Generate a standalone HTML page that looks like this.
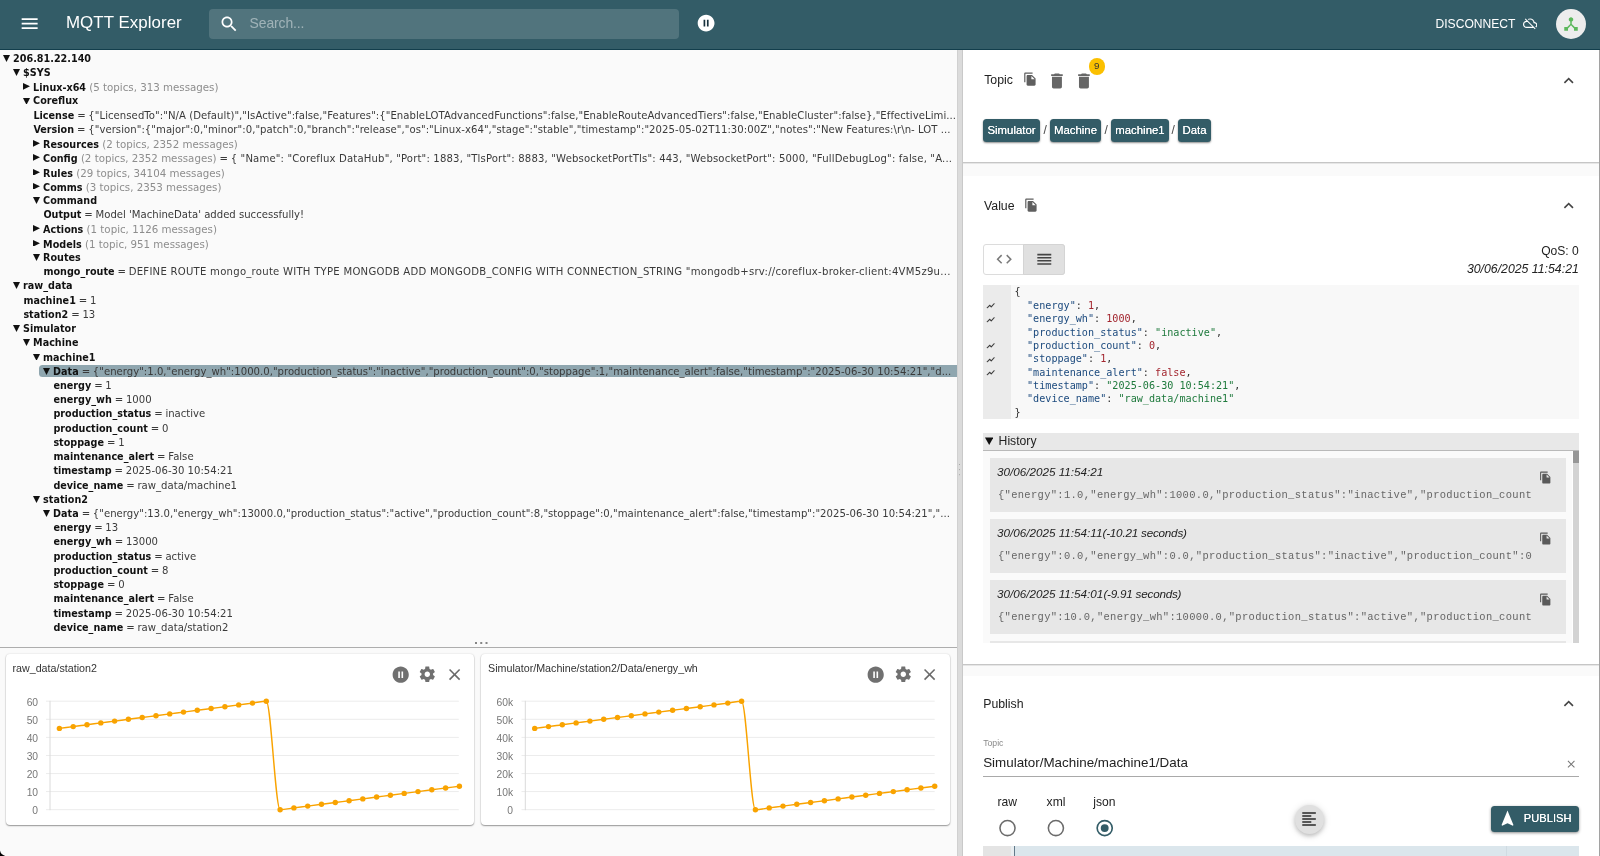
<!DOCTYPE html>
<html lang="en"><head><meta charset="utf-8"><title>MQTT Explorer</title>
<style>
*{box-sizing:border-box;margin:0;padding:0}
html,body{width:1600px;height:856px;overflow:hidden;background:#fafafa;font-family:"Liberation Sans",sans-serif;color:#222}
#app{position:absolute;left:0;top:0;width:1600px;height:856px;overflow:hidden;will-change:transform}
.abs,.ic,.tri,.row,.selbg,.cl,.trend,.hi{position:absolute}
#hdr{position:absolute;left:0;top:0;width:1600px;height:49.3px;background:#335c67;box-shadow:0 1px 0 #123e4c}
#title{position:absolute;left:66px;top:11.7px;font-size:16.9px;line-height:22px;color:#fff;letter-spacing:.05px}
#search{position:absolute;left:209px;top:9px;width:469.6px;height:29.7px;border-radius:4px;background:rgba(255,255,255,.15)}
#search span{position:absolute;left:40.6px;top:5.7px;font-size:13.9px;line-height:17px;letter-spacing:-.1px;color:rgba(255,255,255,.45)}
#disc{position:absolute;left:1435.5px;top:16.9px;font-size:12.1px;line-height:15px;color:#fff}
#tree{position:absolute;left:0;top:50px;width:957px;height:597px;background:#fafafa}
.row{height:14.23px;line-height:14.23px;font-family:"DejaVu Sans","Liberation Sans",sans-serif;font-size:10.1px;white-space:pre;overflow:hidden;text-overflow:ellipsis;color:#3a3a3a}
.row b{color:#111;font-weight:bold;font-size:9.65px}
.row .m{color:#8d8d8d;font-size:10.25px}
.row .e{letter-spacing:-.25px}
.tri{width:7px;height:6.9px;fill:#111}
.selbg{width:925px;height:11.3px;border-radius:3.5px 0 0 3.5px;background:#8fa6af}
#vdiv{position:absolute;left:957px;top:50px;width:6px;height:806px;background:#dbdbdb;border-left:1px solid #d0d0d0;border-right:1px solid #c9c9c9}
#hline{position:absolute;left:0;top:646.8px;width:957px;height:1px;background:#adadad}
.card{position:absolute;top:654.4px;width:468.8px;height:171px;background:#fff;border-radius:4px;box-shadow:0 1px 1.5px rgba(0,0,0,.38),0 0 2px rgba(0,0,0,.14)}
.ct{position:absolute;top:660.6px;font-size:10.7px;line-height:14px;color:#333}
.ax{font-size:10.3px;fill:#777;font-family:"Liberation Sans",sans-serif}
#right{position:absolute;left:963px;top:50px;width:637px;height:806px;background:#fafafa}
.sec{position:absolute;left:963px;width:637px;background:#fff;border-bottom:1px solid #c6c6c6;box-shadow:0 1px 0 #e6e6e6}
.lbl{position:absolute;font-size:12.1px;line-height:15px;color:#222}
.big{font-size:12.3px}
.chip{position:absolute;top:119px;height:23.3px;border-radius:3.5px;background:#335c67;color:#fff;font-size:11.4px;line-height:23px;text-align:center;box-shadow:0 1px 2px rgba(0,0,0,.45);text-shadow:0 0 .4px #fff}
.sl{position:absolute;top:123px;font-size:12px;line-height:15px;color:#444}
.cl{font-family:"DejaVu Sans Mono","Liberation Mono",monospace;font-size:10.15px;line-height:13.35px;white-space:pre;color:#333;height:13.35px}
.cl .k{color:#1c4a7e} .cl .n{color:#a3262f} .cl .s{color:#1f7a3d}
.trend{width:9.4px;height:9.4px}
.hi{left:990px;width:576px;height:53.7px;background:#e7e7e7;overflow:hidden}
.hd{position:absolute;left:7px;top:6.5px;font-size:11.7px;line-height:14px;font-style:italic;color:#222;white-space:nowrap}
.hp{position:absolute;left:8px;top:31.2px;width:534px;overflow:hidden;white-space:pre;font-family:"Liberation Mono",monospace;font-size:10.45px;letter-spacing:.33px;line-height:13px;color:#666}
</style></head><body>
<div id="app">
<div id="hdr"></div>
<svg class="ic" style="left:18.6px;top:12.9px;width:21.3px;height:21.3px" viewBox="0 0 24 24" ><path fill="#fff" d="M3 18h18v-2H3v2zm0-5h18v-2H3v2zm0-7v2h18V6H3z"/></svg>
<div id="title">MQTT Explorer</div>
<div id="search"><span>Search...</span></div>
<svg class="ic" style="left:218.9px;top:13.6px;width:20.3px;height:20.3px" viewBox="0 0 24 24" ><path fill="#fff" d="M15.500 14h-.79l-.28-.27C15.410 12.590 16 11.110 16 9.500 16 5.910 13.090 3 9.500 3S3 5.910 3 9.500 5.910 16 9.500 16c1.610 0 3.090-.59 4.230-1.570l.27.28v.79l5 4.990L20.490 19l-4.990-5zm-6 0C7.010 14 5 11.990 5 9.500S7.010 5 9.500 5 14 7.010 14 9.500 11.990 14 9.500 14z"/></svg>
<div class="abs" style="left:700px;top:18px;width:11px;height:11px;background:#17303c"></div><svg class="ic" style="left:695.6px;top:13.2px;width:20.2px;height:20.2px" viewBox="0 0 24 24" ><path fill="#fff" d="M12 2C6.480 2 2 6.480 2 12s4.480 10 10 10 10-4.480 10-10S17.520 2 12 2zm-1 14H9V8h2v8zm4 0h-2V8h2v8z"/></svg>
<div id="disc">DISCONNECT</div>
<svg class="ic" style="left:1522.6px;top:16.3px;width:14.4px;height:14.4px" viewBox="0 0 24 24" ><path fill="#fff" d="M19.35 10.040C18.670 6.590 15.640 4 12 4c-1.480 0-2.850.43-4.010 1.170l1.460 1.460C10.210 6.230 11.080 6 12 6c3.040 0 5.500 2.460 5.500 5.500v.5H19c1.660 0 3 1.340 3 3 0 1.130-.64 2.110-1.560 2.620l1.450 1.450C23.160 18.160 24 16.680 24 15c0-2.640-2.050-4.780-4.650-4.960zM3 5.270l2.750 2.740C2.560 8.150 0 10.770 0 14c0 3.310 2.690 6 6 6h11.730l2 2L21 20.730 4.270 4 3 5.270zM7.730 10l8 8H6c-2.210 0-4-1.790-4-4s1.790-4 4-4h1.730z"/></svg>
<div class="abs" style="left:1556px;top:9.2px;width:30px;height:30px;border-radius:50%;background:#ededed"></div>
<svg class="ic" style="left:1562px;top:14.8px;width:18px;height:18px" viewBox="0 0 24 24" ><path fill="#5cb85c" d="M17 16l-4-4V8.820C14.160 8.400 15 7.300 15 6c0-1.660-1.340-3-3-3S9 4.340 9 6c0 1.300.84 2.400 2 2.820V12l-4 4H3v5h5v-3.050l4-4.200 4 4.200V21h5v-5h-4z"/></svg>

<div id="tree"></div>
<svg class="tri" style="left:2.6px;top:54.85px" viewBox="0 0 10 10" preserveAspectRatio="none"><path d="M0 0 H10 L5 10 Z"/></svg><div class="row" style="left:13.1px;top:51.75px;width:944.9px"><b>206.81.22.140</b></div>
<svg class="tri" style="left:12.6px;top:69.08px" viewBox="0 0 10 10" preserveAspectRatio="none"><path d="M0 0 H10 L5 10 Z"/></svg><div class="row" style="left:23.1px;top:65.98px;width:934.9px"><b>$SYS</b></div>
<svg class="tri" style="left:23.3px;top:83.20px;width:7px;height:6.7px" viewBox="0 0 10 10" preserveAspectRatio="none"><path d="M0 0 V10 L10 5 Z"/></svg><div class="row" style="left:33.1px;top:80.20px;width:924.9px"><b>Linux-x64</b> <span class="m">(5 topics, 313 messages)</span></div>
<svg class="tri" style="left:22.6px;top:97.53px" viewBox="0 0 10 10" preserveAspectRatio="none"><path d="M0 0 H10 L5 10 Z"/></svg><div class="row" style="left:33.1px;top:94.43px;width:924.9px"><b>Coreflux</b></div>
<div class="row" style="left:33.4px;top:108.65px;width:924.6px"><b>License</b><span class="e"> = </span><span class="v" id="v4" style="letter-spacing:0.052px">{"LicensedTo":"N/A (Default)","IsActive":false,"Features":{"EnableLOTAdvancedFunctions":false,"EnableRouteAdvancedTiers":false,"EnableCluster":false},"EffectiveLimi...</span></div>
<div class="row" style="left:33.4px;top:122.88px;width:924.6px"><b>Version</b><span class="e"> = </span><span class="v" id="v5" style="letter-spacing:0.049px">{"version":{"major":0,"minor":0,"patch":0,"branch":"release","os":"Linux-x64","stage":"stable","timestamp":"2025-05-02T11:30:00Z","notes":"New Features:\r\n- LOT ...</span></div>
<svg class="tri" style="left:33.3px;top:140.11px;width:7px;height:6.7px" viewBox="0 0 10 10" preserveAspectRatio="none"><path d="M0 0 V10 L10 5 Z"/></svg><div class="row" style="left:43.1px;top:137.11px;width:914.9px"><b>Resources</b> <span class="m">(2 topics, 2352 messages)</span></div>
<svg class="tri" style="left:33.3px;top:154.33px;width:7px;height:6.7px" viewBox="0 0 10 10" preserveAspectRatio="none"><path d="M0 0 V10 L10 5 Z"/></svg><div class="row" style="left:43.1px;top:151.33px;width:914.9px"><b>Config</b> <span class="m">(2 topics, 2352 messages)</span><span class="e"> = </span><span class="v" id="v7" style="letter-spacing:0.157px">{ "Name": "Coreflux DataHub", "Port": 1883, "TlsPort": 8883, "WebsocketPortTls": 443, "WebsocketPort": 5000, "FullDebugLog": false, "A...</span></div>
<svg class="tri" style="left:33.3px;top:168.56px;width:7px;height:6.7px" viewBox="0 0 10 10" preserveAspectRatio="none"><path d="M0 0 V10 L10 5 Z"/></svg><div class="row" style="left:43.1px;top:165.56px;width:914.9px"><b>Rules</b> <span class="m">(29 topics, 34104 messages)</span></div>
<svg class="tri" style="left:33.3px;top:182.78px;width:7px;height:6.7px" viewBox="0 0 10 10" preserveAspectRatio="none"><path d="M0 0 V10 L10 5 Z"/></svg><div class="row" style="left:43.1px;top:179.78px;width:914.9px"><b>Comms</b> <span class="m">(3 topics, 2353 messages)</span></div>
<svg class="tri" style="left:32.6px;top:197.11px" viewBox="0 0 10 10" preserveAspectRatio="none"><path d="M0 0 H10 L5 10 Z"/></svg><div class="row" style="left:43.1px;top:194.01px;width:914.9px"><b>Command</b></div>
<div class="row" style="left:43.4px;top:208.24px;width:914.6px"><b>Output</b><span class="e"> = </span><span class="v" id="v11">Model 'MachineData' added successfully!</span></div>
<svg class="tri" style="left:33.3px;top:225.46px;width:7px;height:6.7px" viewBox="0 0 10 10" preserveAspectRatio="none"><path d="M0 0 V10 L10 5 Z"/></svg><div class="row" style="left:43.1px;top:222.46px;width:914.9px"><b>Actions</b> <span class="m">(1 topic, 1126 messages)</span></div>
<svg class="tri" style="left:33.3px;top:239.69px;width:7px;height:6.7px" viewBox="0 0 10 10" preserveAspectRatio="none"><path d="M0 0 V10 L10 5 Z"/></svg><div class="row" style="left:43.1px;top:236.69px;width:914.9px"><b>Models</b> <span class="m">(1 topic, 951 messages)</span></div>
<svg class="tri" style="left:32.6px;top:254.01px" viewBox="0 0 10 10" preserveAspectRatio="none"><path d="M0 0 H10 L5 10 Z"/></svg><div class="row" style="left:43.1px;top:250.91px;width:914.9px"><b>Routes</b></div>
<div class="row" style="left:43.4px;top:265.14px;width:914.6px"><b>mongo_route</b><span class="e"> = </span><span class="v" id="v15" style="letter-spacing:0.250px">DEFINE ROUTE mongo_route WITH TYPE MONGODB ADD MONGODB_CONFIG WITH CONNECTION_STRING "mongodb+srv://coreflux-broker-client:4VM5z9u...</span></div>
<svg class="tri" style="left:12.6px;top:282.47px" viewBox="0 0 10 10" preserveAspectRatio="none"><path d="M0 0 H10 L5 10 Z"/></svg><div class="row" style="left:23.1px;top:279.37px;width:934.9px"><b>raw_data</b></div>
<div class="row" style="left:23.4px;top:293.59px;width:934.6px"><b>machine1</b><span class="e"> = </span><span class="v" id="v17">1</span></div>
<div class="row" style="left:23.4px;top:307.82px;width:934.6px"><b>station2</b><span class="e"> = </span><span class="v" id="v18">13</span></div>
<svg class="tri" style="left:12.6px;top:325.14px" viewBox="0 0 10 10" preserveAspectRatio="none"><path d="M0 0 H10 L5 10 Z"/></svg><div class="row" style="left:23.1px;top:322.04px;width:934.9px"><b>Simulator</b></div>
<svg class="tri" style="left:22.6px;top:339.37px" viewBox="0 0 10 10" preserveAspectRatio="none"><path d="M0 0 H10 L5 10 Z"/></svg><div class="row" style="left:33.1px;top:336.27px;width:924.9px"><b>Machine</b></div>
<svg class="tri" style="left:32.6px;top:353.60px" viewBox="0 0 10 10" preserveAspectRatio="none"><path d="M0 0 H10 L5 10 Z"/></svg><div class="row" style="left:43.1px;top:350.50px;width:914.9px"><b>machine1</b></div>
<div class="selbg" style="left:39.0px;top:365.47px"></div><svg class="tri" style="left:42.6px;top:367.82px" viewBox="0 0 10 10" preserveAspectRatio="none"><path d="M0 0 H10 L5 10 Z"/></svg><div class="row" style="left:53.1px;top:364.72px;width:904.9px"><b>Data</b><span class="e"> = </span><span class="v" id="v22" style="letter-spacing:0.014px">{"energy":1.0,"energy_wh":1000.0,"production_status":"inactive","production_count":0,"stoppage":1,"maintenance_alert":false,"timestamp":"2025-06-30 10:54:21","d...</span></div>
<div class="row" style="left:53.4px;top:378.95px;width:904.6px"><b>energy</b><span class="e"> = </span><span class="v" id="v23">1</span></div>
<div class="row" style="left:53.4px;top:393.17px;width:904.6px"><b>energy_wh</b><span class="e"> = </span><span class="v" id="v24">1000</span></div>
<div class="row" style="left:53.4px;top:407.40px;width:904.6px"><b>production_status</b><span class="e"> = </span><span class="v" id="v25">inactive</span></div>
<div class="row" style="left:53.4px;top:421.63px;width:904.6px"><b>production_count</b><span class="e"> = </span><span class="v" id="v26">0</span></div>
<div class="row" style="left:53.4px;top:435.85px;width:904.6px"><b>stoppage</b><span class="e"> = </span><span class="v" id="v27">1</span></div>
<div class="row" style="left:53.4px;top:450.08px;width:904.6px"><b>maintenance_alert</b><span class="e"> = </span><span class="v" id="v28">False</span></div>
<div class="row" style="left:53.4px;top:464.30px;width:904.6px"><b>timestamp</b><span class="e"> = </span><span class="v" id="v29">2025-06-30 10:54:21</span></div>
<div class="row" style="left:53.4px;top:478.53px;width:904.6px"><b>device_name</b><span class="e"> = </span><span class="v" id="v30">raw_data/machine1</span></div>
<svg class="tri" style="left:32.6px;top:495.86px" viewBox="0 0 10 10" preserveAspectRatio="none"><path d="M0 0 H10 L5 10 Z"/></svg><div class="row" style="left:43.1px;top:492.76px;width:914.9px"><b>station2</b></div>
<svg class="tri" style="left:42.6px;top:510.08px" viewBox="0 0 10 10" preserveAspectRatio="none"><path d="M0 0 H10 L5 10 Z"/></svg><div class="row" style="left:53.1px;top:506.98px;width:904.9px"><b>Data</b><span class="e"> = </span><span class="v" id="v32" style="letter-spacing:0.023px">{"energy":13.0,"energy_wh":13000.0,"production_status":"active","production_count":8,"stoppage":0,"maintenance_alert":false,"timestamp":"2025-06-30 10:54:21","...</span></div>
<div class="row" style="left:53.4px;top:521.21px;width:904.6px"><b>energy</b><span class="e"> = </span><span class="v" id="v33">13</span></div>
<div class="row" style="left:53.4px;top:535.43px;width:904.6px"><b>energy_wh</b><span class="e"> = </span><span class="v" id="v34">13000</span></div>
<div class="row" style="left:53.4px;top:549.66px;width:904.6px"><b>production_status</b><span class="e"> = </span><span class="v" id="v35">active</span></div>
<div class="row" style="left:53.4px;top:563.89px;width:904.6px"><b>production_count</b><span class="e"> = </span><span class="v" id="v36">8</span></div>
<div class="row" style="left:53.4px;top:578.11px;width:904.6px"><b>stoppage</b><span class="e"> = </span><span class="v" id="v37">0</span></div>
<div class="row" style="left:53.4px;top:592.34px;width:904.6px"><b>maintenance_alert</b><span class="e"> = </span><span class="v" id="v38">False</span></div>
<div class="row" style="left:53.4px;top:606.56px;width:904.6px"><b>timestamp</b><span class="e"> = </span><span class="v" id="v39">2025-06-30 10:54:21</span></div>
<div class="row" style="left:53.4px;top:620.79px;width:904.6px"><b>device_name</b><span class="e"> = </span><span class="v" id="v40">raw_data/station2</span></div>
<div class="abs" style="left:475px;top:641.9px;width:1.7px;height:1.7px;background:#868686;box-shadow:5.25px 0 0 #868686,10.5px 0 0 #868686"></div>
<div id="hline"></div>
<div class="card" style="left:5.6px"></div>
<div class="card" style="left:481px"></div>
<div class="ct" style="left:12.5px">raw_data/station2</div>
<div class="ct" style="left:488.1px">Simulator/Machine/station2/Data/energy_wh</div>
<svg class="ic" style="left:390.9px;top:664.9px;width:19.4px;height:19.4px" viewBox="0 0 24 24" ><path fill="#707070" d="M12 2C6.480 2 2 6.480 2 12s4.480 10 10 10 10-4.480 10-10S17.520 2 12 2zm-1 14H9V8h2v8zm4 0h-2V8h2v8z"/></svg><svg class="ic" style="left:418.4px;top:665.3px;width:18.6px;height:18.6px" viewBox="0 0 24 24" ><path fill="#707070" d="M19.43 12.98c.04-.32.07-.64.07-.98s-.03-.66-.07-.98l2.11-1.65c.19-.15.24-.42.12-.64l-2-3.46c-.12-.22-.39-.3-.61-.22l-2.49 1c-.52-.4-1.08-.73-1.69-.98l-.38-2.65C14.46 2.180 14.250 2 14 2h-4c-.25 0-.46.18-.49.42l-.38 2.65c-.61.25-1.170.59-1.690.98l-2.490-1c-.23-.09-.49 0-.61.22l-2 3.460c-.13.22-.07.49.12.640l2.110 1.650c-.04.32-.07.650-.07.980s.03.66.07.98l-2.110 1.650c-.19.15-.24.42-.12.640l2 3.460c.12.22.39.3.61.22l2.490-1c.52.4 1.080.73 1.690.98l.38 2.650c.03.240.24.420.49.420h4c.25 0 .46-.18.49-.42l.38-2.650c.61-.25 1.170-.59 1.690-.98l2.490 1c.23.09.49 0 .61-.22l2-3.460c.12-.22.07-.49-.12-.64l-2.110-1.650zM12 15.500c-1.930 0-3.500-1.570-3.500-3.500s1.570-3.500 3.500-3.500 3.500 1.570 3.500 3.500-1.570 3.500-3.500 3.500z"/></svg><svg class="ic" style="left:445px;top:665px;width:19.2px;height:19.2px" viewBox="0 0 24 24" ><path fill="#6a6a6a" d="M19 6.410L17.590 5 12 10.590 6.410 5 5 6.410 10.590 12 5 17.590 6.410 19 12 13.410 17.590 19 19 17.590 13.410 12z"/></svg>
<svg class="ic" style="left:866.3px;top:664.9px;width:19.4px;height:19.4px" viewBox="0 0 24 24" ><path fill="#707070" d="M12 2C6.480 2 2 6.480 2 12s4.480 10 10 10 10-4.480 10-10S17.520 2 12 2zm-1 14H9V8h2v8zm4 0h-2V8h2v8z"/></svg><svg class="ic" style="left:893.9px;top:665.3px;width:18.6px;height:18.6px" viewBox="0 0 24 24" ><path fill="#707070" d="M19.43 12.98c.04-.32.07-.64.07-.98s-.03-.66-.07-.98l2.11-1.65c.19-.15.24-.42.12-.64l-2-3.46c-.12-.22-.39-.3-.61-.22l-2.49 1c-.52-.4-1.08-.73-1.69-.98l-.38-2.65C14.46 2.180 14.250 2 14 2h-4c-.25 0-.46.18-.49.42l-.38 2.65c-.61.25-1.170.59-1.690.98l-2.490-1c-.23-.09-.49 0-.61.22l-2 3.460c-.13.22-.07.49.12.640l2.110 1.650c-.04.32-.07.650-.07.980s.03.66.07.98l-2.110 1.650c-.19.15-.24.42-.12.640l2 3.460c.12.22.39.3.61.22l2.490-1c.52.4 1.080.73 1.690.98l.38 2.650c.03.240.24.420.49.420h4c.25 0 .46-.18.49-.42l.38-2.650c.61-.25 1.170-.59 1.690-.98l2.490 1c.23.09.49 0 .61-.22l2-3.460c.12-.22.07-.49-.12-.64l-2.110-1.650zM12 15.500c-1.930 0-3.500-1.570-3.500-3.500s1.570-3.500 3.500-3.500 3.500 1.570 3.500 3.500-1.570 3.500-3.500 3.500z"/></svg><svg class="ic" style="left:920.2px;top:665px;width:19.2px;height:19.2px" viewBox="0 0 24 24" ><path fill="#6a6a6a" d="M19 6.410L17.590 5 12 10.590 6.410 5 5 6.410 10.590 12 5 17.590 6.410 19 12 13.410 17.590 19 19 17.590 13.410 12z"/></svg>
<svg class="abs" style="left:0;top:0" width="957" height="856" viewBox="0 0 957 856">
<line x1="46.0" x2="458.8" y1="809.7" y2="809.7" stroke="#ececec" stroke-width="1"/>
<text x="38.1" y="813.9" text-anchor="end" class="ax">0</text>
<line x1="46.0" x2="458.8" y1="791.6" y2="791.6" stroke="#ececec" stroke-width="1"/>
<text x="38.1" y="795.8" text-anchor="end" class="ax">10</text>
<line x1="46.0" x2="458.8" y1="773.6" y2="773.6" stroke="#ececec" stroke-width="1"/>
<text x="38.1" y="777.8" text-anchor="end" class="ax">20</text>
<line x1="46.0" x2="458.8" y1="755.5" y2="755.5" stroke="#ececec" stroke-width="1"/>
<text x="38.1" y="759.7" text-anchor="end" class="ax">30</text>
<line x1="46.0" x2="458.8" y1="737.4" y2="737.4" stroke="#ececec" stroke-width="1"/>
<text x="38.1" y="741.6" text-anchor="end" class="ax">40</text>
<line x1="46.0" x2="458.8" y1="719.3" y2="719.3" stroke="#ececec" stroke-width="1"/>
<text x="38.1" y="723.5" text-anchor="end" class="ax">50</text>
<line x1="46.0" x2="458.8" y1="701.2" y2="701.2" stroke="#ececec" stroke-width="1"/>
<text x="38.1" y="705.5" text-anchor="end" class="ax">60</text>
<line x1="50.0" x2="50.0" y1="700.8" y2="810.2" stroke="#dadada" stroke-width="1"/>
<path d="M59.4 728.4 C64.0 727.8 68.6 727.2 73.2 726.6 C77.8 726.0 82.4 725.4 87.0 724.7 C91.6 724.1 96.2 723.5 100.8 722.9 C105.4 722.3 110.0 721.7 114.6 721.1 C119.2 720.5 123.8 719.9 128.4 719.3 C133.0 718.7 137.6 718.1 142.2 717.5 C146.8 716.9 151.4 716.3 156.0 715.7 C160.5 715.1 165.1 714.5 169.7 713.9 C174.3 713.3 178.9 712.7 183.5 712.1 C188.1 711.5 192.7 710.9 197.3 710.3 C201.9 709.7 206.5 709.1 211.1 708.5 C215.7 707.9 220.3 707.3 224.9 706.7 C229.5 706.1 234.1 705.5 238.7 704.9 C243.3 704.3 247.9 703.7 252.5 703.1 C257.1 702.5 261.7 701.2 266.3 701.2 C270.9 701.2 275.5 809.7 280.1 809.7 C284.7 809.7 289.3 808.5 293.9 807.9 C298.5 807.3 303.1 806.7 307.7 806.1 C312.3 805.5 316.9 804.9 321.5 804.3 C326.1 803.7 330.7 803.1 335.3 802.5 C339.9 801.9 344.5 801.3 349.1 800.7 C353.7 800.1 358.3 799.5 362.8 798.9 C367.4 798.3 372.0 797.6 376.6 797.0 C381.2 796.4 385.8 795.8 390.4 795.2 C395.0 794.6 399.6 794.0 404.2 793.4 C408.8 792.8 413.4 792.2 418.0 791.6 C422.6 791.0 427.2 790.4 431.8 789.8 C436.4 789.2 441.0 788.6 445.6 788.0 C450.2 787.4 454.8 786.8 459.4 786.2" fill="none" stroke="#f9a300" stroke-width="1.45" stroke-linejoin="round"/>
<circle cx="59.4" cy="728.4" r="2.7" fill="#f9a300"/>
<circle cx="73.2" cy="726.6" r="2.7" fill="#f9a300"/>
<circle cx="87.0" cy="724.7" r="2.7" fill="#f9a300"/>
<circle cx="100.8" cy="722.9" r="2.7" fill="#f9a300"/>
<circle cx="114.6" cy="721.1" r="2.7" fill="#f9a300"/>
<circle cx="128.4" cy="719.3" r="2.7" fill="#f9a300"/>
<circle cx="142.2" cy="717.5" r="2.7" fill="#f9a300"/>
<circle cx="156.0" cy="715.7" r="2.7" fill="#f9a300"/>
<circle cx="169.7" cy="713.9" r="2.7" fill="#f9a300"/>
<circle cx="183.5" cy="712.1" r="2.7" fill="#f9a300"/>
<circle cx="197.3" cy="710.3" r="2.7" fill="#f9a300"/>
<circle cx="211.1" cy="708.5" r="2.7" fill="#f9a300"/>
<circle cx="224.9" cy="706.7" r="2.7" fill="#f9a300"/>
<circle cx="238.7" cy="704.9" r="2.7" fill="#f9a300"/>
<circle cx="252.5" cy="703.1" r="2.7" fill="#f9a300"/>
<circle cx="266.3" cy="701.2" r="2.7" fill="#f9a300"/>
<circle cx="280.1" cy="809.7" r="2.7" fill="#f9a300"/>
<circle cx="293.9" cy="807.9" r="2.7" fill="#f9a300"/>
<circle cx="307.7" cy="806.1" r="2.7" fill="#f9a300"/>
<circle cx="321.5" cy="804.3" r="2.7" fill="#f9a300"/>
<circle cx="335.3" cy="802.5" r="2.7" fill="#f9a300"/>
<circle cx="349.1" cy="800.7" r="2.7" fill="#f9a300"/>
<circle cx="362.8" cy="798.9" r="2.7" fill="#f9a300"/>
<circle cx="376.6" cy="797.0" r="2.7" fill="#f9a300"/>
<circle cx="390.4" cy="795.2" r="2.7" fill="#f9a300"/>
<circle cx="404.2" cy="793.4" r="2.7" fill="#f9a300"/>
<circle cx="418.0" cy="791.6" r="2.7" fill="#f9a300"/>
<circle cx="431.8" cy="789.8" r="2.7" fill="#f9a300"/>
<circle cx="445.6" cy="788.0" r="2.7" fill="#f9a300"/>
<circle cx="459.4" cy="786.2" r="2.7" fill="#f9a300"/>
<line x1="521.5" x2="934.7" y1="809.7" y2="809.7" stroke="#ececec" stroke-width="1"/>
<text x="513.1" y="813.9" text-anchor="end" class="ax">0</text>
<line x1="521.5" x2="934.7" y1="791.6" y2="791.6" stroke="#ececec" stroke-width="1"/>
<text x="513.1" y="795.8" text-anchor="end" class="ax">10k</text>
<line x1="521.5" x2="934.7" y1="773.6" y2="773.6" stroke="#ececec" stroke-width="1"/>
<text x="513.1" y="777.8" text-anchor="end" class="ax">20k</text>
<line x1="521.5" x2="934.7" y1="755.5" y2="755.5" stroke="#ececec" stroke-width="1"/>
<text x="513.1" y="759.7" text-anchor="end" class="ax">30k</text>
<line x1="521.5" x2="934.7" y1="737.4" y2="737.4" stroke="#ececec" stroke-width="1"/>
<text x="513.1" y="741.6" text-anchor="end" class="ax">40k</text>
<line x1="521.5" x2="934.7" y1="719.3" y2="719.3" stroke="#ececec" stroke-width="1"/>
<text x="513.1" y="723.5" text-anchor="end" class="ax">50k</text>
<line x1="521.5" x2="934.7" y1="701.2" y2="701.2" stroke="#ececec" stroke-width="1"/>
<text x="513.1" y="705.5" text-anchor="end" class="ax">60k</text>
<line x1="525.3" x2="525.3" y1="700.8" y2="810.2" stroke="#dadada" stroke-width="1"/>
<path d="M534.7 728.4 C539.3 727.8 543.9 727.2 548.5 726.6 C553.1 726.0 557.7 725.4 562.3 724.7 C566.9 724.1 571.5 723.5 576.1 722.9 C580.7 722.3 585.3 721.7 589.9 721.1 C594.5 720.5 599.1 719.9 603.7 719.3 C608.3 718.7 612.9 718.1 617.5 717.5 C622.1 716.9 626.7 716.3 631.3 715.7 C635.8 715.1 640.4 714.5 645.0 713.9 C649.6 713.3 654.2 712.7 658.8 712.1 C663.4 711.5 668.0 710.9 672.6 710.3 C677.2 709.7 681.8 709.1 686.4 708.5 C691.0 707.9 695.6 707.3 700.2 706.7 C704.8 706.1 709.4 705.5 714.0 704.9 C718.6 704.3 723.2 703.7 727.8 703.1 C732.4 702.5 737.0 701.2 741.6 701.2 C746.2 701.2 750.8 809.7 755.4 809.7 C760.0 809.7 764.6 808.5 769.2 807.9 C773.8 807.3 778.4 806.7 783.0 806.1 C787.6 805.5 792.2 804.9 796.8 804.3 C801.4 803.7 806.0 803.1 810.6 802.5 C815.2 801.9 819.8 801.3 824.4 800.7 C829.0 800.1 833.6 799.5 838.1 798.9 C842.7 798.3 847.3 797.6 851.9 797.0 C856.5 796.4 861.1 795.8 865.7 795.2 C870.3 794.6 874.9 794.0 879.5 793.4 C884.1 792.8 888.7 792.2 893.3 791.6 C897.9 791.0 902.5 790.4 907.1 789.8 C911.7 789.2 916.3 788.6 920.9 788.0 C925.5 787.4 930.1 786.8 934.7 786.2" fill="none" stroke="#f9a300" stroke-width="1.45" stroke-linejoin="round"/>
<circle cx="534.7" cy="728.4" r="2.7" fill="#f9a300"/>
<circle cx="548.5" cy="726.6" r="2.7" fill="#f9a300"/>
<circle cx="562.3" cy="724.7" r="2.7" fill="#f9a300"/>
<circle cx="576.1" cy="722.9" r="2.7" fill="#f9a300"/>
<circle cx="589.9" cy="721.1" r="2.7" fill="#f9a300"/>
<circle cx="603.7" cy="719.3" r="2.7" fill="#f9a300"/>
<circle cx="617.5" cy="717.5" r="2.7" fill="#f9a300"/>
<circle cx="631.3" cy="715.7" r="2.7" fill="#f9a300"/>
<circle cx="645.0" cy="713.9" r="2.7" fill="#f9a300"/>
<circle cx="658.8" cy="712.1" r="2.7" fill="#f9a300"/>
<circle cx="672.6" cy="710.3" r="2.7" fill="#f9a300"/>
<circle cx="686.4" cy="708.5" r="2.7" fill="#f9a300"/>
<circle cx="700.2" cy="706.7" r="2.7" fill="#f9a300"/>
<circle cx="714.0" cy="704.9" r="2.7" fill="#f9a300"/>
<circle cx="727.8" cy="703.1" r="2.7" fill="#f9a300"/>
<circle cx="741.6" cy="701.2" r="2.7" fill="#f9a300"/>
<circle cx="755.4" cy="809.7" r="2.7" fill="#f9a300"/>
<circle cx="769.2" cy="807.9" r="2.7" fill="#f9a300"/>
<circle cx="783.0" cy="806.1" r="2.7" fill="#f9a300"/>
<circle cx="796.8" cy="804.3" r="2.7" fill="#f9a300"/>
<circle cx="810.6" cy="802.5" r="2.7" fill="#f9a300"/>
<circle cx="824.4" cy="800.7" r="2.7" fill="#f9a300"/>
<circle cx="838.1" cy="798.9" r="2.7" fill="#f9a300"/>
<circle cx="851.9" cy="797.0" r="2.7" fill="#f9a300"/>
<circle cx="865.7" cy="795.2" r="2.7" fill="#f9a300"/>
<circle cx="879.5" cy="793.4" r="2.7" fill="#f9a300"/>
<circle cx="893.3" cy="791.6" r="2.7" fill="#f9a300"/>
<circle cx="907.1" cy="789.8" r="2.7" fill="#f9a300"/>
<circle cx="920.9" cy="788.0" r="2.7" fill="#f9a300"/>
<circle cx="934.7" cy="786.2" r="2.7" fill="#f9a300"/>
</svg>
<div id="vdiv"></div>
<div class="abs" style="left:959px;top:463.6px;width:1.4px;height:1.4px;background:#a8a8a8;box-shadow:0 5.1px 0 #a8a8a8,0 10.2px 0 #a8a8a8"></div>

<div id="right"></div>
<div class="sec" style="top:50px;height:113px"></div>
<div class="sec" style="top:176px;height:489px"></div>
<div class="sec" style="top:676.4px;height:190px"></div>

<div class="lbl big" style="left:984.2px;top:73.2px">Topic</div>
<svg class="ic" style="left:1022.6px;top:72.3px;width:14.4px;height:14.4px" viewBox="0 0 24 24" ><path fill="#5f5f5f" d="M16 1H4c-1.1 0-2 .9-2 2v14h2V3h12V1zm-1 4l6 6v10c0 1.1-.9 2-2 2H7.99C6.89 23 6 22.1 6 21l.01-14c0-1.1.89-2 1.99-2h7zm-1 7h5.5L14 6.500v5.500z"/></svg><svg class="ic" style="left:1047.1px;top:70.6px;width:19.9px;height:19.9px" viewBox="0 0 24 24" ><path fill="#666" d="M6 19c0 1.1.9 2 2 2h8c1.1 0 2-.9 2-2V7H6v12zM19 4h-3.5l-1-1h-5l-1 1H5v2h14V4z"/></svg><svg class="ic" style="left:1074px;top:70.6px;width:19.9px;height:19.9px" viewBox="0 0 24 24" ><path fill="#666" d="M6 19c0 1.1.9 2 2 2h8c1.1 0 2-.9 2-2V7H6v12zM19 4h-3.5l-1-1h-5l-1 1H5v2h14V4z"/></svg>
<div class="abs" style="left:1088.6px;top:58.2px;width:16.4px;height:16.4px;border-radius:50%;background:#fbc000;color:#333;font-size:9.8px;line-height:16.6px;text-align:center">9</div>
<svg class="ic" style="left:1559.3px;top:70.6px;width:19.4px;height:19.4px" viewBox="0 0 24 24" ><path fill="#444" d="M7.410 15.410L12 10.830l4.590 4.580L18 14l-6-6-6 6z"/></svg>
<div class="chip" style="left:983.3px;width:56.5px">Simulator</div><div class="sl" style="left:1043.4px">/</div>
<div class="chip" style="left:1050.3px;width:50.4px">Machine</div><div class="sl" style="left:1104.4px">/</div>
<div class="chip" style="left:1111.3px;width:57.3px">machine1</div><div class="sl" style="left:1171.6px">/</div>
<div class="chip" style="left:1178.3px;width:32.5px">Data</div>

<div class="lbl big" style="left:984px;top:198.6px">Value</div>
<svg class="ic" style="left:1024.3px;top:197.5px;width:14.4px;height:14.4px" viewBox="0 0 24 24" ><path fill="#5f5f5f" d="M16 1H4c-1.1 0-2 .9-2 2v14h2V3h12V1zm-1 4l6 6v10c0 1.1-.9 2-2 2H7.99C6.89 23 6 22.1 6 21l.01-14c0-1.1.89-2 1.99-2h7zm-1 7h5.5L14 6.500v5.500z"/></svg>
<svg class="ic" style="left:1559.3px;top:196px;width:19.4px;height:19.4px" viewBox="0 0 24 24" ><path fill="#444" d="M7.410 15.410L12 10.830l4.590 4.580L18 14l-6-6-6 6z"/></svg>
<div class="abs" style="left:983.3px;top:244.3px;width:81.3px;height:30.5px;border:1px solid #dcdcdc;border-radius:3px;background:#fff"></div>
<div class="abs" style="left:1023px;top:244.3px;width:41.6px;height:30.5px;border:1px solid #d4d4d4;border-radius:0 3px 3px 0;background:#e0e0e0"></div>
<svg class="ic" style="left:994.5px;top:250.4px;width:18.4px;height:18.4px" viewBox="0 0 24 24" ><path fill="#7a7a7a" d="M9.400 16.600L4.800 12l4.600-4.600L8 6l-6 6 6 6 1.400-1.400zm5.200 0l4.600-4.600-4.600-4.600L16 6l6 6-6 6-1.400-1.400z"/></svg><svg class="ic" style="left:1034.8px;top:250.2px;width:18.6px;height:18.6px" viewBox="0 0 24 24" ><path fill="#444" d="M3 15h18v-2H3v2zm0 4h18v-2H3v2zm0-8h18V9H3v2zm0-6v2h18V5H3z"/></svg>
<div class="lbl" style="right:21.2px;top:243.5px;text-align:right">QoS: 0</div>
<div class="lbl" style="right:21.2px;top:262.4px;text-align:right;font-style:italic;font-size:12.3px">30/06/2025 11:54:21</div>
<div class="abs" style="left:983.2px;top:284.8px;width:595.6px;height:134px;background:#f8f8f8"></div>
<div class="abs" style="left:983.2px;top:284.8px;width:27.6px;height:134px;background:#ebebeb"></div>
<div class="cl" style="left:1014.6px;top:285.35px">{</div>
<div class="cl" style="left:1027.0px;top:298.74px"><span class="k">"energy"</span>: <span class="n">1</span>,</div>
<svg class="trend" style="left:986.2px;top:301.19px" viewBox="0 0 24 24"><path d="M3.500 18.490l6-6.010 4 4L22 6.920l-1.410-1.410-7.090 7.970-4-4L2 16.990z" fill="#2e2e2e" stroke="#2e2e2e" stroke-width=".6"/></svg>
<div class="cl" style="left:1027.0px;top:312.12px"><span class="k">"energy_wh"</span>: <span class="n">1000</span>,</div>
<svg class="trend" style="left:986.2px;top:314.57px" viewBox="0 0 24 24"><path d="M3.500 18.490l6-6.010 4 4L22 6.920l-1.410-1.410-7.090 7.970-4-4L2 16.990z" fill="#2e2e2e" stroke="#2e2e2e" stroke-width=".6"/></svg>
<div class="cl" style="left:1027.0px;top:325.50px"><span class="k">"production_status"</span>: <span class="s">"inactive"</span>,</div>
<div class="cl" style="left:1027.0px;top:338.89px"><span class="k">"production_count"</span>: <span class="n">0</span>,</div>
<svg class="trend" style="left:986.2px;top:341.34px" viewBox="0 0 24 24"><path d="M3.500 18.490l6-6.010 4 4L22 6.920l-1.410-1.410-7.090 7.970-4-4L2 16.990z" fill="#2e2e2e" stroke="#2e2e2e" stroke-width=".6"/></svg>
<div class="cl" style="left:1027.0px;top:352.28px"><span class="k">"stoppage"</span>: <span class="n">1</span>,</div>
<svg class="trend" style="left:986.2px;top:354.73px" viewBox="0 0 24 24"><path d="M3.500 18.490l6-6.010 4 4L22 6.920l-1.410-1.410-7.090 7.970-4-4L2 16.990z" fill="#2e2e2e" stroke="#2e2e2e" stroke-width=".6"/></svg>
<div class="cl" style="left:1027.0px;top:365.66px"><span class="k">"maintenance_alert"</span>: <span class="n">false</span>,</div>
<svg class="trend" style="left:986.2px;top:368.11px" viewBox="0 0 24 24"><path d="M3.500 18.490l6-6.010 4 4L22 6.920l-1.410-1.410-7.090 7.970-4-4L2 16.990z" fill="#2e2e2e" stroke="#2e2e2e" stroke-width=".6"/></svg>
<div class="cl" style="left:1027.0px;top:379.05px"><span class="k">"timestamp"</span>: <span class="s">"2025-06-30 10:54:21"</span>,</div>
<div class="cl" style="left:1027.0px;top:392.43px"><span class="k">"device_name"</span>: <span class="s">"raw_data/machine1"</span></div>
<div class="cl" style="left:1014.6px;top:405.82px">}</div>
<div class="abs" style="left:983.2px;top:433px;width:595.6px;height:18px;background:#e8e8e8;border-bottom:1px solid #b9b9b9"></div>
<svg class="tri" style="left:985px;top:437px;width:8.4px;height:8.4px" viewBox="0 0 10 10"><path d="M0 0.6 H10 L5 9.6 Z"/></svg>
<div class="lbl" style="left:998.6px;top:433.6px;font-size:12.2px">History</div>
<div class="abs" style="left:983.2px;top:451px;width:589.2px;height:192.4px;background:#fafafa"></div>
<div class="hi" style="top:458.0px"><div class="hd">30/06/2025 11:54:21</div><div class="hp">{"energy":1.0,"energy_wh":1000.0,"production_status":"inactive","production_count":0,"stoppage":1}</div>
<svg class="ic" style="left:549px;top:12.5px;width:13px;height:13px" viewBox="0 0 24 24"><path fill="#5a5a5a" d="M16 1H4c-1.1 0-2 .9-2 2v14h2V3h12V1zm-1 4l6 6v10c0 1.1-.9 2-2 2H7.99C6.89 23 6 22.1 6 21l.01-14c0-1.1.89-2 1.99-2h7zm-1 7h5.5L14 6.500v5.500z"/></svg></div>
<div class="hi" style="top:519.1px"><div class="hd">30/06/2025 11:54:11<span style="letter-spacing:-.22px">(-10.21 seconds)</span></div><div class="hp">{"energy":0.0,"energy_wh":0.0,"production_status":"inactive","production_count":0,"stoppage":1}</div>
<svg class="ic" style="left:549px;top:12.5px;width:13px;height:13px" viewBox="0 0 24 24"><path fill="#5a5a5a" d="M16 1H4c-1.1 0-2 .9-2 2v14h2V3h12V1zm-1 4l6 6v10c0 1.1-.9 2-2 2H7.99C6.89 23 6 22.1 6 21l.01-14c0-1.1.89-2 1.99-2h7zm-1 7h5.5L14 6.500v5.500z"/></svg></div>
<div class="hi" style="top:580.2px"><div class="hd">30/06/2025 11:54:01<span style="letter-spacing:-.22px">(-9.91 seconds)</span></div><div class="hp">{"energy":10.0,"energy_wh":10000.0,"production_status":"active","production_count":5,"stoppage":0}</div>
<svg class="ic" style="left:549px;top:12.5px;width:13px;height:13px" viewBox="0 0 24 24"><path fill="#5a5a5a" d="M16 1H4c-1.1 0-2 .9-2 2v14h2V3h12V1zm-1 4l6 6v10c0 1.1-.9 2-2 2H7.99C6.89 23 6 22.1 6 21l.01-14c0-1.1.89-2 1.99-2h7zm-1 7h5.5L14 6.500v5.500z"/></svg></div>
<div class="hi" style="top:641.1px;height:2.4px"></div>
<div class="abs" style="left:1572.6px;top:451px;width:6.2px;height:192.4px;background:#d3d3d3"></div>
<div class="abs" style="left:1572.6px;top:451px;width:6.2px;height:12.2px;background:#979797"></div>

<div class="lbl big" style="left:983.2px;top:697.3px">Publish</div>
<svg class="ic" style="left:1559.3px;top:694px;width:19.4px;height:19.4px" viewBox="0 0 24 24" ><path fill="#444" d="M7.410 15.410L12 10.830l4.590 4.580L18 14l-6-6-6 6z"/></svg>
<div class="lbl" style="left:983.2px;top:738px;font-size:8.7px;line-height:11px;color:#8a8a8a">Topic</div>
<div class="lbl" style="left:983.2px;top:754.4px;font-size:13.4px;line-height:17px;color:#222">Simulator/Machine/machine1/Data</div>
<svg class="ic" style="left:1565px;top:758px;width:12.4px;height:12.4px" viewBox="0 0 24 24" ><path fill="#777" d="M19 6.410L17.590 5 12 10.590 6.410 5 5 6.410 10.590 12 5 17.590 6.410 19 12 13.410 17.590 19 19 17.590 13.410 12z"/></svg>
<div class="abs" style="left:983.2px;top:776.4px;width:595.6px;height:1px;background:#a9a9a9"></div>
<div class="lbl" style="left:987.2px;top:794.6px;width:40px;text-align:center">raw</div>
<div class="lbl" style="left:1036px;top:794.6px;width:40px;text-align:center">xml</div>
<div class="lbl" style="left:1084.4px;top:794.6px;width:40px;text-align:center">json</div>
<svg class="abs" style="left:990px;top:815px" width="130" height="27" viewBox="990 815 130 27">
<circle cx="1007.5" cy="828.1" r="7.55" fill="none" stroke="#6b6b6b" stroke-width="1.55"/>
<circle cx="1055.9" cy="828.1" r="7.55" fill="none" stroke="#6b6b6b" stroke-width="1.55"/>
<circle cx="1104.7" cy="828.1" r="7.55" fill="none" stroke="#335c67" stroke-width="1.65"/>
<circle cx="1104.7" cy="828.1" r="3.95" fill="#335c67"/>
</svg>
<div class="abs" style="left:1294.7px;top:804.6px;width:29.6px;height:29.6px;border-radius:50%;background:#e0e0e0;box-shadow:0 2px 4px rgba(0,0,0,.2),0 1px 8px rgba(0,0,0,.12)"></div>
<svg class="ic" style="left:1300.4px;top:810.4px;width:18.1px;height:18.1px" viewBox="0 0 24 24" ><path fill="#2a2a2a" d="M15 15H3v2h12v-2zm0-8H3v2h12V7zM3 13h18v-2H3v2zm0 8h18v-2H3v2zM3 3v2h18V3H3z"/></svg>
<div class="abs" style="left:1490.8px;top:806px;width:88px;height:26.2px;border-radius:3.5px;background:#335c67;box-shadow:0 1px 3px rgba(0,0,0,.45)"></div>
<svg class="ic" style="left:1497.8px;top:809.4px;width:19px;height:19px" viewBox="0 0 24 24" ><path fill="#fff" d="M12 2L4.500 20.290l.71.71L12 18l6.790 3 .71-.71z"/></svg>
<div class="lbl" style="left:1523.8px;top:811.4px;font-size:11.1px;color:#fff;letter-spacing:.05px;text-shadow:0 0 .4px #fff">PUBLISH</div>
<div class="abs" style="left:983.2px;top:846px;width:595.6px;height:10px;background:#dbe6ec"></div>
<div class="abs" style="left:983.2px;top:846px;width:32px;height:10px;background:#e9eef1"></div>
<div class="abs" style="left:983.2px;top:846px;width:27.8px;height:10px;background:#e4e4e4"></div>
<div class="abs" style="left:1014.3px;top:846px;width:1px;height:10px;background:#647a8a"></div>
<div class="abs" style="left:1505.6px;top:846px;width:1px;height:10px;background:#cfdbe2"></div>
<div class="abs" style="left:1599px;top:50px;width:1px;height:806px;background:#a2a2a2"></div>
<svg class="abs" style="left:0;top:846px" width="10" height="10" viewBox="0 0 10 10"><path d="M0 4.600 Q0.800 8.800 5.200 10 H0Z" fill="#000"/></svg>
</div>
</body></html>
